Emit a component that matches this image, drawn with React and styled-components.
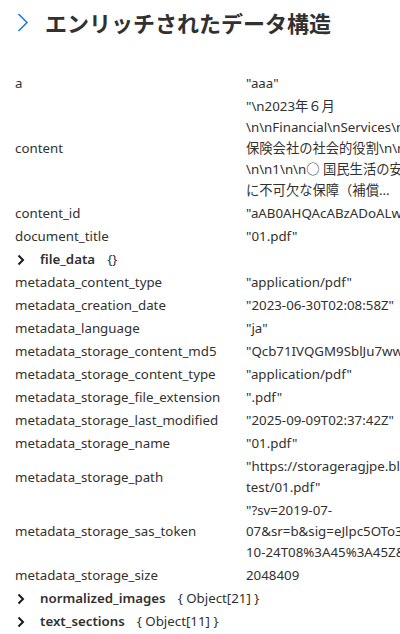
import React from 'react';
import styled, { createGlobalStyle } from 'styled-components';

const GlobalStyle = createGlobalStyle`
  html, body {
    margin: 0;
    padding: 0;
    background: #fff;
    overflow: hidden;
  }
  body {
    font-family: "Segoe UI", "Noto Sans", "Noto Sans CJK JP", sans-serif;
    color: #323130;
  }
`;

const Page = styled.div`
  width: 400px;
  height: 634px;
  padding: 8px 0 0 15px;
  box-sizing: border-box;
  overflow: hidden;
`;

const Header = styled.div`
  display: flex;
  align-items: center;
  gap: 16px;
  height: 28px;
  padding-left: 2px;
`;

const Title = styled.h2`
  margin: 0;
  font-family: "Noto Sans CJK JP", sans-serif;
  font-size: 22px;
  font-weight: 700;
  line-height: 28px;
  color: #323130;
  white-space: nowrap;
`;

const Table = styled.div`
  margin-top: 36px;
  display: flex;
  flex-direction: column;
`;

const Row = styled.div`
  display: grid;
  grid-template-columns: 231px max-content;
  align-items: center;
  padding: 1px 0;
  font-size: 13.3px;
  line-height: 21px;
`;

const Key = styled.div`
  white-space: nowrap;
`;

const Value = styled.div`
  display: flex;
  flex-direction: column;
  white-space: nowrap;
`;

const ExpandRow = styled.div`
  display: flex;
  align-items: center;
  height: 23px;
  font-size: 13.3px;
  line-height: 21px;
`;

const Chevron = styled.span`
  display: inline-flex;
  width: 25px;
  padding-left: 2px;
  box-sizing: border-box;
`;

const ExpandKey = styled.span`
  font-weight: 600;
  margin-right: 12px;
`;

const Meta = styled.span`
  color: #323130;
  font-weight: 400;
`;

const rows = [
  { k: 'a', v: ['"aaa"'] },
  {
    k: 'content',
    v: [
      '"\\n2023年６月',
      '\\n\\nFinancial\\nServices\\n\\n2023',
      '保険会社の社会的役割\\n\\n',
      '\\n\\n1\\n\\n○ 国民生活の安定',
      'に不可欠な保障（補償...',
    ],
  },
  { k: 'content_id', v: ['"aAB0AHQAcABzADoALwAvAHMAdABvAHIAYQBn"'] },
  { k: 'document_title', v: ['"01.pdf"'] },
  { expand: true, k: 'file_data', meta: '{}' },
  { k: 'metadata_content_type', v: ['"application/pdf"'] },
  { k: 'metadata_creation_date', v: ['"2023-06-30T02:08:58Z"'] },
  { k: 'metadata_language', v: ['"ja"'] },
  { k: 'metadata_storage_content_md5', v: ['"Qcb71IVQGM9SblJu7wwQ=="'] },
  { k: 'metadata_storage_content_type', v: ['"application/pdf"'] },
  { k: 'metadata_storage_file_extension', v: ['".pdf"'] },
  { k: 'metadata_storage_last_modified', v: ['"2025-09-09T02:37:42Z"'] },
  { k: 'metadata_storage_name', v: ['"01.pdf"'] },
  {
    k: 'metadata_storage_path',
    v: ['"https://storageragjpe.blob.core.windows.net/ragjpe-', 'test/01.pdf"'],
  },
  {
    k: 'metadata_storage_sas_token',
    v: ['"?sv=2019-07-', '07&sr=b&sig=eJlpc5OTo3Dq%2B', '10-24T08%3A45%3A45Z&sp=r"'],
  },
  { k: 'metadata_storage_size', v: ['2048409'] },
  { expand: true, k: 'normalized_images', meta: '{ Object[21] }' },
  { expand: true, k: 'text_sections', meta: '{ Object[11] }' },
];

const SmallChevron = () => (
  <svg width="8" height="12" viewBox="0 0 8 12">
    <path d="M1.5 1.5 L6 6 L1.5 10.5" fill="none" stroke="#1b1a19" strokeWidth="2" />
  </svg>
);

const TitleChevron = () => (
  <svg width="12" height="19" viewBox="0 0 12 19">
    <path d="M1.5 1 L10 9.5 L1.5 18" fill="none" stroke="#1f7fd4" strokeWidth="1.6" />
  </svg>
);

export default function App() {
  return (
    <>
      <GlobalStyle />
      <Page>
        <Header>
          <TitleChevron />
          <Title>エンリッチされたデータ構造</Title>
        </Header>
        <Table>
          {rows.map((r) =>
            r.expand ? (
              <ExpandRow key={r.k}>
                <Chevron><SmallChevron /></Chevron>
                <ExpandKey>{r.k}</ExpandKey>
                <Meta>{r.meta}</Meta>
              </ExpandRow>
            ) : (
              <Row key={r.k}>
                <Key>{r.k}</Key>
                <Value>
                  {r.v.map((line, i) => (
                    <span key={i}>{line}</span>
                  ))}
                </Value>
              </Row>
            )
          )}
        </Table>
      </Page>
    </>
  );
}
